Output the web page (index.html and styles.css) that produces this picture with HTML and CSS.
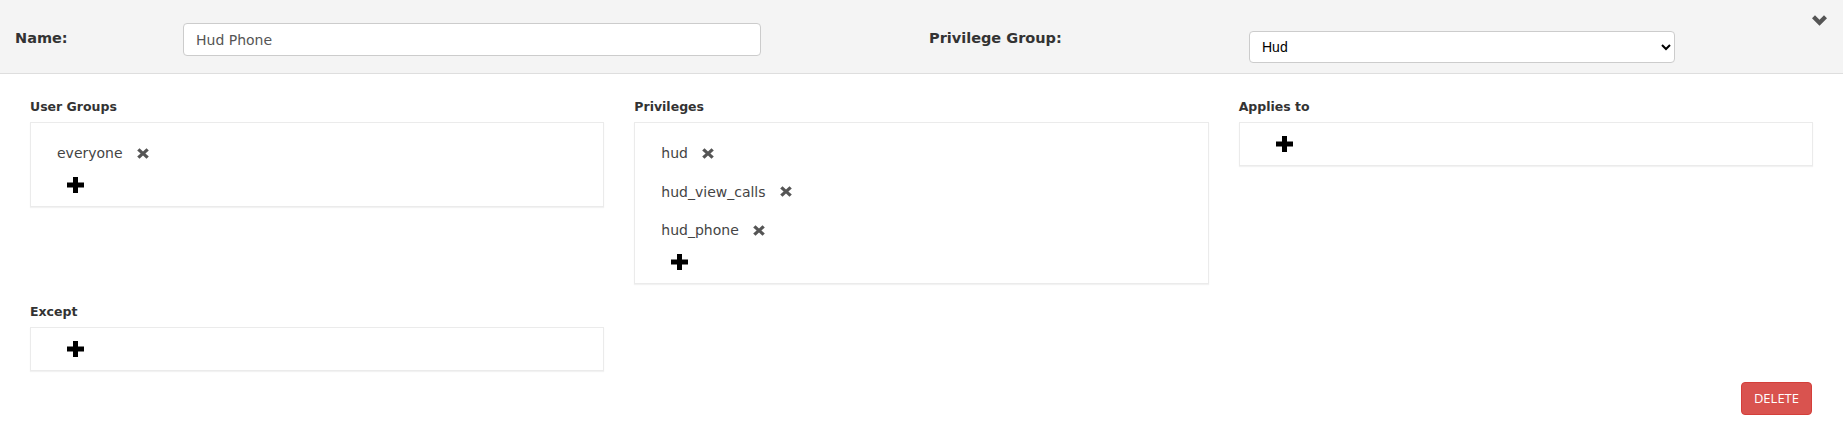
FILE: index.html
```html
<!DOCTYPE html>
<html lang="en">
  <head>
    <meta charset="UTF-8" />
    <meta name="viewport" content="width=device-width, initial-scale=1.0" />
    <title>Privilege Rule</title>
    <link rel="stylesheet" href="styles.css">
  </head>
  <body>
    <div class="rule-header">
      <label class="field-label name-label" for="rule-name">Name:</label>
      <input id="rule-name" class="name-input" type="text" value="Hud Phone" />
      <label class="field-label group-label" for="rule-group">Privilege Group:</label>
      <select id="rule-group" class="group-select">
        <option>Hud</option>
      </select>
      <!-- collapse toggle -->
      <svg class="collapse-toggle" width="15" height="11" viewBox="0 0 15 11">
        <path d="M0 3.2 L3 0.2 L7.5 4.7 L12 0.2 L15 3.2 L7.5 10.7 Z" fill="#555" />
      </svg>
    </div>

    <div class="rule-body">
      <div class="section">
        <div class="section-title">User Groups</div>
        <div class="box">
          <div class="item">
            <span>everyone</span>
            <svg class="remove" width="12" height="11" viewBox="0 0 12 11">
              <path d="M0.2 2.5 L2.5 0.2 L6 3.4 L9.5 0.2 L11.8 2.5 L8.4 5.5 L11.8 8.5 L9.5 10.8 L6 7.6 L2.5 10.8 L0.2 8.5 L3.6 5.5 Z" fill="#555" />
            </svg>
          </div>
          <div class="add">
            <svg width="17" height="16" viewBox="0 0 17 16">
              <path d="M6 0 H11 V5.5 H17 V10.5 H11 V16 H6 V10.5 H0 V5.5 H6 Z" fill="#000" />
            </svg>
          </div>
        </div>
      </div>

      <div class="section">
        <div class="section-title">Privileges</div>
        <div class="box">
          <div class="item">
            <span>hud</span>
            <svg class="remove" width="12" height="11" viewBox="0 0 12 11">
              <path d="M0.2 2.5 L2.5 0.2 L6 3.4 L9.5 0.2 L11.8 2.5 L8.4 5.5 L11.8 8.5 L9.5 10.8 L6 7.6 L2.5 10.8 L0.2 8.5 L3.6 5.5 Z" fill="#555" />
            </svg>
          </div>
          <div class="item">
            <span>hud_view_calls</span>
            <svg class="remove" width="12" height="11" viewBox="0 0 12 11">
              <path d="M0.2 2.5 L2.5 0.2 L6 3.4 L9.5 0.2 L11.8 2.5 L8.4 5.5 L11.8 8.5 L9.5 10.8 L6 7.6 L2.5 10.8 L0.2 8.5 L3.6 5.5 Z" fill="#555" />
            </svg>
          </div>
          <div class="item">
            <span>hud_phone</span>
            <svg class="remove" width="12" height="11" viewBox="0 0 12 11">
              <path d="M0.2 2.5 L2.5 0.2 L6 3.4 L9.5 0.2 L11.8 2.5 L8.4 5.5 L11.8 8.5 L9.5 10.8 L6 7.6 L2.5 10.8 L0.2 8.5 L3.6 5.5 Z" fill="#555" />
            </svg>
          </div>
          <div class="add">
            <svg width="17" height="16" viewBox="0 0 17 16">
              <path d="M6 0 H11 V5.5 H17 V10.5 H11 V16 H6 V10.5 H0 V5.5 H6 Z" fill="#000" />
            </svg>
          </div>
        </div>
      </div>

      <div class="section">
        <div class="section-title">Applies to</div>
        <div class="box">
          <div class="add">
            <svg width="17" height="16" viewBox="0 0 17 16">
              <path d="M6 0 H11 V5.5 H17 V10.5 H11 V16 H6 V10.5 H0 V5.5 H6 Z" fill="#000" />
            </svg>
          </div>
        </div>
      </div>

      <div class="section">
        <div class="section-title">Except</div>
        <div class="box">
          <div class="add">
            <svg width="17" height="16" viewBox="0 0 17 16">
              <path d="M6 0 H11 V5.5 H17 V10.5 H11 V16 H6 V10.5 H0 V5.5 H6 Z" fill="#000" />
            </svg>
          </div>
        </div>
      </div>
    </div>

    <div class="actions">
      <button class="btn-delete" type="button">DELETE</button>
    </div>
  </body>
</html>
```

FILE: styles.css
```css
html {
  box-sizing: border-box;
}
*,
*::before,
*::after {
  box-sizing: inherit;
}
body {
  margin: 0;
  padding: 0;
  background-color: #fff;
  font-family: "DejaVu Sans", sans-serif;
  color: #333;
}

/* header strip */
.rule-header {
  display: flex;
  align-items: flex-start;
  height: 74px;
  padding: 0 16px 0 15px;
  background-color: #f4f4f4;
  border-bottom: 1px solid #dedede;
}
.field-label {
  margin-top: 28px;
  font-size: 14.5px;
  line-height: 20px;
  font-weight: bold;
  color: #333;
}
.name-label {
  width: 168px;
}
.group-label {
  width: 320px;
}
.name-input {
  width: 578px;
  height: 33px;
  margin: 23px 168px 0 0;
  padding: 6px 12px;
  border: 1px solid #ccc;
  border-radius: 4px;
  background: #fff;
  font-family: "DejaVu Sans", sans-serif;
  font-size: 14px;
  color: #555;
}
.group-select {
  width: 426px;
  height: 32px;
  margin-top: 31px;
  padding: 4px 8px;
  border: 1px solid #ccc;
  border-radius: 4px;
  background-color: #fff;
  font-family: "Liberation Sans", sans-serif;
  font-size: 14px;
  color: #000;
}
.collapse-toggle {
  margin: 15px 0 0 auto;
}

/* rule sections */
.rule-body {
  display: grid;
  grid-template-columns: repeat(3, 1fr);
  column-gap: 30px;
  row-gap: 19px;
  padding: 24px 30px 0;
  align-items: start;
}
.section-title {
  height: 18px;
  margin-bottom: 6px;
  font-size: 12.5px;
  line-height: 18px;
  font-weight: bold;
  color: #333;
}
.box {
  padding: 9px 0 9px 26px;
  border: 1px solid #ebebeb;
  box-shadow: 0 1px 1px rgba(0, 0, 0, 0.05);
  background: #fff;
}
.item {
  display: flex;
  align-items: center;
  height: 24px;
  margin-top: 9px;
  font-size: 14px;
  color: #444;
}
.item + .item {
  margin-top: 14.5px;
}
.remove {
  margin-left: 14px;
}
.add {
  display: flex;
  align-items: center;
  height: 24px;
  margin-top: 8px;
  padding-left: 10px;
}
.box > .add:first-child {
  margin-top: 0;
}

.actions {
  display: flex;
  justify-content: flex-end;
  padding: 11px 31px 0;
}
.btn-delete {
  padding: 8px 12px;
  border: 1px solid #d43f3a;
  border-radius: 4px;
  background-color: #d9534f;
  color: #fff;
  font-family: "Open Sans", sans-serif;
  font-size: 13px;
  line-height: 15px;
}
```
